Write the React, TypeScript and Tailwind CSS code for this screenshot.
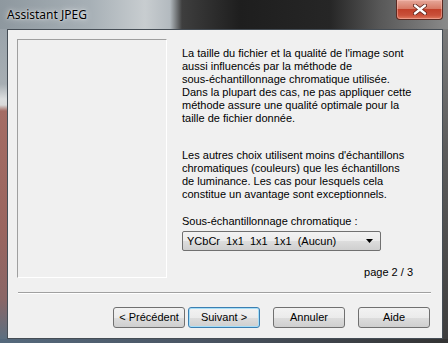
import React from 'react';

const btn =
  'w-[72px] h-[21px] flex items-center justify-center rounded-[3px] border text-[11px] text-black bg-[linear-gradient(to_bottom,#f2f2f2_0%,#ebebeb_50%,#dddddd_51%,#cfcfcf_100%)]';

const App: React.FC = () => {
  return (
    <div className="w-[448px] h-[343px] flex flex-col overflow-hidden bg-[#4f5f6e] font-['Liberation_Sans',Arial,sans-serif]">
      {/* Title bar */}
      <div className="relative h-[29px] shrink-0 flex items-center pl-[7px] bg-[linear-gradient(to_right,#8e989f_0px,#a7b0b6_90px,#c8cdd0_145px,#b3babf_170px,#3e3e3e_182px,#1e1e1e_240px,#262626_330px,#585858_380px,#8a8a8a_448px)]">
        <span className="text-[12px] leading-none text-black font-['Noto_Sans',sans-serif] [text-shadow:0_0_6px_rgba(255,255,255,0.9),0_0_2px_rgba(255,255,255,0.8)]">
          Assistant JPEG
        </span>
        <div className="absolute top-0 right-[5px] w-[47px] h-[20px] rounded-b-[4px] border border-t-0 border-[#5b2a22] flex items-center justify-center bg-[linear-gradient(to_bottom,#e6a89a_0%,#d77a66_45%,#c2412b_50%,#c9503a_80%,#e07a5e_100%)] shadow-[inset_0_0_0_1px_rgba(255,200,190,0.45)]">
          <svg width="14" height="11" viewBox="0 0 14 11">
            <path d="M2 1.5 L12 9.5 M12 1.5 L2 9.5" stroke="#5a2018" strokeWidth="4" strokeLinecap="round" />
            <path d="M2 1.5 L12 9.5 M12 1.5 L2 9.5" stroke="#ffffff" strokeWidth="2.4" strokeLinecap="round" />
          </svg>
        </div>
      </div>

      <div className="flex h-[310px] shrink-0">
        {/* left frame */}
        <div className="w-[7px] bg-[linear-gradient(to_bottom,#9aa3aa_0px,#a7aeb3_55px,#dcdedf_70px,#d9d9d9_76px,#a46c64_82px,#9a655f_200px,#8a6666_270px,#5c6f80_310px)]" />

        {/* client area */}
        <div className="w-[436px] flex flex-col border border-[#454d55] bg-[#f0f0f0]">
          <div className="flex pl-[9px] pt-[9px]">
            <div className="w-[150px] h-[239px] border border-t-[#a0a0a0] border-l-[#a0a0a0] border-b-white border-r-white" />
            <div className="ml-[15px] flex flex-col text-[11px] leading-[13px] text-black">
              <div className="mt-[8px]">
                <div>La taille du fichier et la qualité de l'image sont</div>
                <div>aussi influencés par la méthode de</div>
                <div>sous-échantillonnage chromatique utilisée.</div>
                <div>Dans la plupart des cas, ne pas appliquer cette</div>
                <div>méthode assure une qualité optimale pour la</div>
                <div>taille de fichier donnée.</div>
              </div>
              <div className="mt-[24px]">
                <div>Les autres choix utilisent moins d'échantillons</div>
                <div>chromatiques (couleurs) que les échantillons</div>
                <div>de luminance. Les cas pour lesquels cela</div>
                <div>constitue un avantage sont exceptionnels.</div>
              </div>
              <div className="mt-[14px]">Sous-échantillonnage chromatique :</div>
              <div className="mt-[3px] w-[199px] h-[20px] flex items-center justify-between pl-[4px] pr-[7px] rounded-[2px] border border-[#707070] bg-[linear-gradient(to_bottom,#f2f2f2_0%,#ebebeb_50%,#dddddd_51%,#cfcfcf_100%)]">
                <span className="whitespace-pre">YCbCr  1x1  1x1  1x1  (Aucun)</span>
                <svg width="7" height="4" viewBox="0 0 7 4">
                  <path d="M0 0 H7 L3.5 4 Z" fill="#000" />
                </svg>
              </div>
              <div className="mt-[15px] text-right w-[231px]">page 2 / 3</div>
            </div>
          </div>

          {/* separator */}
          <div className="mx-[10px] mt-[13px] w-[413px] border-t border-b border-t-[#a0a0a0] border-b-white" />

          {/* buttons */}
          <div className="flex justify-end pr-[12px] mt-[13px]">
            <div className={`${btn} border-[#707070]`}>&lt; Précédent</div>
            <div className={`${btn} ml-[3px] border-[#3c7fb1] shadow-[inset_0_0_0_1px_#a6def8]`}>Suivant &gt;</div>
            <div className={`${btn} ml-[13px] border-[#707070]`}>Annuler</div>
            <div className={`${btn} ml-[13px] border-[#707070]`}>Aide</div>
          </div>
        </div>

        {/* right frame */}
        <div className="w-[5px] bg-[linear-gradient(to_bottom,#7a7a7a_0px,#5c5c5c_120px,#3e3e3e_310px)]" />
      </div>

      {/* bottom frame */}
      <div className="flex-1 bg-[linear-gradient(to_right,#55697c_0px,#4a5563_200px,#333333_448px)]" />
    </div>
  );
};

export default App;
